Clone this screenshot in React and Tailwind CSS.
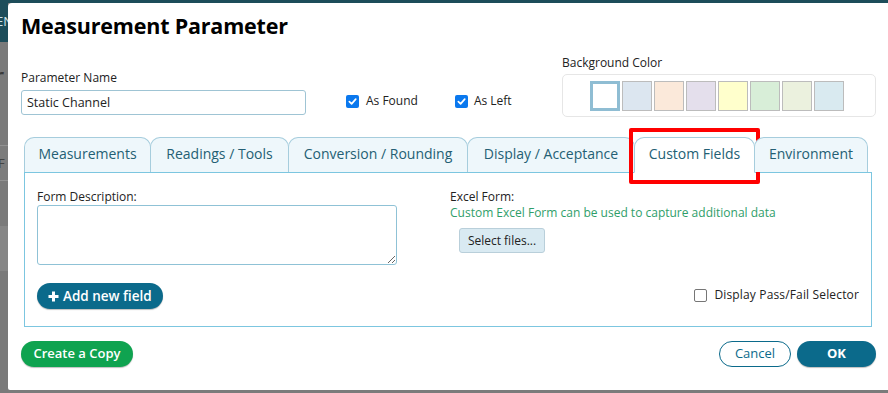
const TABS = [
  { label: 'Measurements', w: 'w-[127px]' },
  { label: 'Readings / Tools', w: 'w-[139px]' },
  { label: 'Conversion / Rounding', w: 'w-[180px]' },
  { label: 'Display / Acceptance', w: 'w-[168px]' },
  { label: 'Custom Fields', w: 'w-[121px]', active: true },
  { label: 'Environment', w: 'w-[114px]' },
]

const SWATCHES = ['#ffffff', '#dce6f0', '#fbe9da', '#e4dfec', '#ffffcc', '#d8eed8', '#ebf1de', '#d9eaf0']

function Check({ checked }) {
  return checked ? (
    <span className="w-[13px] h-[13px] rounded-[2px] bg-[#0a78ee] flex items-center justify-center">
      <svg width="9" height="9" viewBox="0 0 10 10" fill="none">
        <path d="M1.5 5.2 4 7.6 8.6 2.4" stroke="white" strokeWidth="1.9" strokeLinecap="round" strokeLinejoin="round" />
      </svg>
    </span>
  ) : (
    <span className="w-[13px] h-[13px] rounded-[2px] border border-[#767676] bg-white" />
  )
}

export default function App() {
  return (
    <div className="w-[888px] h-[393px] overflow-hidden flex bg-[#7b7b7b] font-['Open_Sans',sans-serif] text-[#222]">
      {/* backdrop strip */}
      <div className="w-[8px] shrink-0 flex flex-col">
        <div className="h-[42px] bg-[#1d4d5a] text-[#cfe3ea] text-[13px] leading-[42px] -ml-[4px]">EN</div>
        <div className="h-[103px] bg-[#7a7a7a] text-[#3a3a3a] text-[30px] leading-[70px] -ml-[10px] pl-[2px]">r</div>
        <div className="h-[36px] border-y border-[#929292] bg-[#7c7c7c] text-[#444] text-[13px] leading-[34px] -ml-[6px] pl-[4px]">F</div>
        <div className="h-[45px] bg-[#7a7a7a]" />
        <div className="h-[45px] bg-[#868686]" />
        <div className="flex-1 bg-[#7a7a7a]" />
      </div>

      {/* modal */}
      <div className="flex flex-col">
        <div className="h-[3px] bg-[#1d4d5a]" />
        <div className="w-[885px] h-[387px] bg-white rounded-tl-[4px] rounded-bl-[2px] pl-[13px] pr-[17px] pt-[7px]">
          <h1 className="text-[21.5px] leading-[32px] font-bold text-black tracking-[-0.2px]">Measurement Parameter</h1>

          <div className="flex items-end mt-[13px] h-[62px]">
            <div className="w-[285px] mb-[2px]">
              <div className="text-[12px] leading-[16px] mb-[4px]">Parameter Name</div>
              <div className="h-[25px] border border-[#9fc4d4] rounded-[3px] px-[5px] text-[12.5px] leading-[23px]">Static Channel</div>
            </div>
            <label className="flex items-center gap-[7px] ml-[40px] mb-[7px] text-[12px]">
              <Check checked />
              As Found
            </label>
            <label className="flex items-center gap-[6px] ml-[37px] mb-[7px] text-[12px]">
              <Check checked />
              As Left
            </label>
            <div className="ml-auto w-[314px]">
              <div className="text-[12px] leading-[16px] mb-[3px]">Background Color</div>
              <div className="h-[43px] border border-[#e6e6e6] rounded-[5px] flex items-center pl-[27px] gap-[2px]">
                {SWATCHES.map((c, i) => (
                  <span
                    key={c}
                    className={i === 0 ? 'w-[30px] h-[30px] border-[3px] border-[#8fbdd3]' : 'w-[30px] h-[30px] border border-[#bcbcbc]'}
                    style={{ background: c }}
                  />
                ))}
              </div>
            </div>
          </div>

          {/* tabs */}
          <div className="ml-[3px] mr-[4px] mt-[20px]">
            <div className="flex h-[35px] relative z-10">
              {TABS.map(t => (
                <div
                  key={t.label}
                  className={`${t.w} shrink-0 relative border border-[#a6cddd] rounded-t-[10px] flex items-center justify-center pb-[3px] text-[14px] text-[#245f74] ${t.active ? 'bg-white border-b-white h-[36px]' : 'bg-[#eef7fb] border-b-0 h-[35px]'} -mr-[1px]`}
                >
                  {t.label}
                  {t.active && (
                    <span className="absolute -left-[6px] -top-[10px] w-[131px] h-[56px] border-[4px] border-[#ff0000] rounded-[2px]" />
                  )}
                </div>
              ))}
            </div>
            <div className="h-[155px] border border-[#7cc6e0] px-[12px] pt-[16px] flex">
              <div className="w-[413px]">
                <div className="text-[12px] leading-[16px]">Form Description:</div>
                <textarea className="block w-[360px] h-[60px] border border-[#8fc2d6] rounded-[3px] resize-y" />
                <button className="mt-[18px] h-[26px] px-[11px] rounded-full bg-[#0b6a8b] text-white text-[13.5px] font-semibold flex items-center gap-[4px] shadow-[0_1px_1px_rgba(0,0,0,0.25)]">
                  <svg width="11" height="11" viewBox="0 0 11 11">
                    <path d="M4 0.5h3v3.5h3.5v3H7v3.5H4V7H0.5V4H4z" fill="white" />
                  </svg>
                  Add new field
                </button>
              </div>
              <div className="flex-1 flex flex-col">
                <div className="text-[12px] leading-[16px]">Excel Form:</div>
                <div className="text-[12px] leading-[15px] text-[#2f9e6a]">Custom Excel Form can be used to capture additional data</div>
                <div className="mt-[8px] ml-[9px] w-[86px] h-[25px] bg-[#d9eaf2] border border-[#b9cfda] rounded-[3px] text-[12px] flex items-center justify-center">Select files...</div>
                <label className="mt-[33px] self-end flex items-center gap-[7px] text-[12px] tracking-[0.15px]">
                  <Check />
                  Display Pass/Fail Selector
                </label>
              </div>
            </div>
          </div>

          {/* footer */}
          <div className="flex items-center mt-[14px]">
            <button className="h-[26px] w-[112px] rounded-full bg-[#0fa350] text-white text-[13px] font-semibold shadow-[0_1px_1px_rgba(0,0,0,0.25)]">Create a Copy</button>
            <button className="ml-auto h-[26px] w-[72px] rounded-full bg-white border border-[#0b6a8b] text-[#0b6a8b] text-[13px]">Cancel</button>
            <button className="ml-[6px] h-[26px] w-[79px] rounded-full bg-[#0b6a8b] text-white text-[13px] font-bold shadow-[0_1px_1px_rgba(0,0,0,0.25)]">OK</button>
          </div>
        </div>
      </div>
    </div>
  )
}
